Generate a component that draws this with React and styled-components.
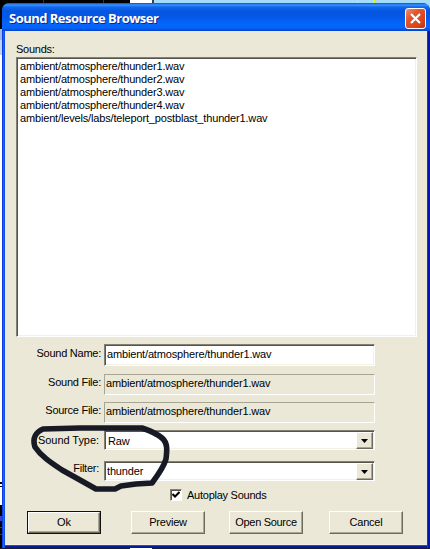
import React from "react";
import styled, { createGlobalStyle, css } from "styled-components";

const Global = createGlobalStyle`
  * { box-sizing: border-box; }
  html, body { margin: 0; overflow: hidden; }
`;

const Desktop = styled.div`
  width: 430px;
  height: 549px;
  padding: 3px 0 1px 2px;
  background:
    linear-gradient(90deg, #000 43px, #333 43px 44px, #000 44px 103px, #333 103px 104px, #000 104px 130px, #fff 130px 152px, #345 152px 154px, #a5dcfa 154px 357px, #e8f020 357px 358px, #a5dcfa 358px 373px, #e8f020 373px 375px, #a5dcfa 375px) 0 0 / 430px 9px no-repeat,
    linear-gradient(90deg, #151b38 130px, #fff 130px 152px, #151b38 152px) 0 548px / 430px 1px no-repeat,
    linear-gradient(#000 29px, #9fb6f0 29px 40px, #c4d2f6 40px 55px, #fff 55px 482px, #000 482px 484px, #fff 484px 486px, #000 486px 487px, #fff 487px 505px, #000 505px 516px, #3444c8 516px 521px, #000 521px 527px, #444 527px 528px, #000 528px 534px, #444 534px 535px, #000 535px) 0 0 / 6px 549px no-repeat,
    #101a3c;
`;

const Dialog = styled.main`
  position: relative;
  display: flex;
  flex-direction: column;
  width: 428px;
  height: 545px;
  border-radius: 8px 8px 0 0;
  background: linear-gradient(90deg, #0b3fdc 1px, #1d63f4 1px 2px, #0b50ea 2px 3px, #0b50ea 425px, #0a3ce4 425px 426px, #0418a8 426px);
  font: 11px/13px "Liberation Sans", Arial, sans-serif;
  color: #000;
  padding: 0 3px 3px;
`;

const TitleBar = styled.header`
  display: flex;
  align-items: center;
  justify-content: space-between;
  height: 28px;
  margin: 0 -3px;
  padding: 2px 4px 0 7px;
  border-radius: 7px 7px 0 0;
  background: linear-gradient(#0a4fd0 0, #3a94ff 2px, #1168ee 4px, #0556e0 8px, #0558e8 14px, #0366fd 21px, #0364f8 25px, #0443cf 28px);
`;

const Title = styled.h1`
  margin: 0;
  font: bold 13px/18px "Open Sans", "Noto Sans", sans-serif;
  letter-spacing: -0.52px;
  color: #fff;
  text-shadow: 1px 1px 0 #0a2a90;
  white-space: nowrap;
`;

const Close = styled.button`
  display: grid;
  place-items: center;
  width: 21px;
  height: 21px;
  padding: 0;
  border: 1px solid #fff;
  border-radius: 3px;
  background: linear-gradient(135deg, #f09078, #e2552f 35%, #d9431a 75%, #b8320e);
`;

const Body = styled.section`
  flex: 1;
  padding: 12px 9px 0 11px;
  border-bottom: 1px solid #f3f0e2;
  background: #ebe8d7;
  box-shadow: 0 1px #0a50ee, 0 3px #06189c;
`;

const Text = styled.span`
  letter-spacing: ${(p) => p.$track || 0}px;
  white-space: nowrap;
`;

const sunken = css`
  border: 1px solid;
  border-color: #827f73 #fff #fff #827f73;
`;

const ListBox = styled.ul`
  ${sunken}
  width: 401px;
  height: 280px;
  margin: 0 0 7px;
  padding: 2px 0 0 3px;
  list-style: none;
  background: #fff;
  box-shadow: inset 1px 1px #55534b, inset -1px -1px #f3f1e6;
`;

const Item = styled.li`
  height: 13px;
`;

const Heading = styled.div`
  height: 14px;
`;

const Field = styled.label`
  display: flex;
  height: ${(p) => p.$height}px;
`;

const Caption = styled.span`
  width: ${(p) => p.$width}px;
  margin-right: ${(p) => 88 - p.$width}px;
  padding-top: ${(p) => p.$drop}px;
  text-align: right;
`;

const Value = styled.span`
  ${sunken}
  display: flex;
  justify-content: space-between;
  width: 271px;
  height: ${(p) => p.$height}px;
  padding-left: ${(p) => p.$indent}px;
  line-height: ${(p) => p.$line}px;
  background: ${(p) => (p.$readOnly ? "#ebe8d7" : "#fff")};
  box-shadow: ${(p) => (p.$readOnly ? "none" : "inset 1px 1px #55534b, inset -1px -1px #f3f1e6")};
  ${(p) => p.$readOnly && "border-color: #a8a594 #fff #fff #a8a594;"}
`;

const raised = css`
  border: 1px solid;
  border-color: #fff #6d6a5e #6d6a5e #fff;
  box-shadow: inset -1px -1px #a9a695;
  background: #ebe8d7;
`;

const Arrow = styled.span`
  ${raised}
  display: grid;
  place-items: center;
  width: 17px;
  height: 17px;
  margin: 1px 1px 0 0;
`;

const CheckRow = styled.label`
  display: flex;
  align-items: center;
  gap: 5px;
  height: 13px;
  margin-left: 154px;
`;

const CheckBox = styled.span`
  ${sunken}
  display: grid;
  place-items: center;
  width: 12px;
  height: 12px;
  margin-top: -2px;
  background: #fff;
  box-shadow: inset 1px 1px #55534b;
`;

const Buttons = styled.footer`
  display: flex;
  margin: 9px 0 0 11px;
`;

const Button = styled.button`
  ${raised}
  flex: none;
  width: 74px;
  height: 23px;
  margin-right: ${(p) => p.$gap || 0}px;
  padding: 0 0 1px;
  font: inherit;
  color: #000;
  ${(p) => p.$primary && "outline: 1px solid #111; outline-offset: -1px; border: 2px solid; border-color: #fff #6d6a5e #6d6a5e #fff;"}
`;

const Marker = styled.svg`
  position: absolute;
  left: 27px;
  top: 418px;
  pointer-events: none;
`;

const SOUNDS = [
  "ambient/atmosphere/thunder1.wav",
  "ambient/atmosphere/thunder2.wav",
  "ambient/atmosphere/thunder3.wav",
  "ambient/atmosphere/thunder4.wav",
  "ambient/levels/labs/teleport_postblast_thunder1.wav",
];

const FIELDS = [
  { label: "Sound Name:", value: SOUNDS[0], height: 30, box: 22, indent: 2, drop: 3, line: 19, width: 85 },
  { label: "Sound File:", value: SOUNDS[0], height: 28, box: 21, indent: 1, drop: 2, line: 17, width: 85, readOnly: true },
  { label: "Source File:", value: SOUNDS[0], height: 28, box: 21, indent: 1, drop: 2, line: 17, width: 85, readOnly: true },
  { label: "Sound Type:", value: "Raw", height: 31, box: 20, indent: 3, drop: 4, line: 20, width: 83, combo: true, track: -0.05 },
  { label: "Filter:", value: "thunder", height: 28, box: 20, indent: 2, drop: 1, line: 18, width: 83, combo: true },
];

export default function App() {
  return (
    <Desktop>
      <Global />
      <Dialog>
        <TitleBar>
          <Title>Sound Resource Browser</Title>
          <Close aria-label="Close">
            <svg width="13" height="13" viewBox="0 0 13 13">
              <path d="M2 2L11 11M11 2L2 11" stroke="#fff" strokeWidth="2.2" />
            </svg>
          </Close>
        </TitleBar>
        <Body>
          <Heading><Text $track={-0.25}>Sounds:</Text></Heading>
          <ListBox>
            {SOUNDS.map((s) => <Item key={s}><Text $track={-0.16}>{s}</Text></Item>)}
          </ListBox>
          {FIELDS.map((f) => (
            <Field key={f.label} $height={f.height}>
              <Caption $width={f.width} $drop={f.drop}><Text $track={f.track ?? -0.25}>{f.label}</Text></Caption>
              <Value $height={f.box} $indent={f.indent} $line={f.line} $readOnly={f.readOnly}>
                <Text $track={-0.16}>{f.value}</Text>
                {f.combo && (
                  <Arrow>
                    <svg width="7" height="4" viewBox="0 0 7 4"><path d="M0 0H7L3.5 4Z" /></svg>
                  </Arrow>
                )}
              </Value>
            </Field>
          ))}
          <CheckRow>
            <CheckBox>
              <svg width="8" height="8" viewBox="0 0 8 8"><path d="M0.5 3L3 5.5L7.5 1" fill="none" stroke="#000" strokeWidth="2" /></svg>
            </CheckBox>
            <Text $track={-0.25}>Autoplay Sounds</Text>
          </CheckRow>
          <Buttons>
            <Button $primary $gap={30}><Text>Ok</Text></Button>
            <Button $gap={24}><Text $track={-0.2}>Preview</Text></Button>
            <Button $gap={26}><Text $track={-0.3}>Open Source</Text></Button>
            <Button><Text $track={-0.2}>Cancel</Text></Button>
          </Buttons>
        </Body>
        <Marker width="150" height="80" viewBox="29 421 150 80">
          <path d="M43 429L80 428L142 428C148 430 156 433 162 438C168 443 167 451 166 459C164 466 158 475 152 483L136 484L121 486L115 489L96 489L80 480L62 470C50 462 41 456 35 447C32 438 36 432 43 429Z" fill="none" stroke="#171a24" strokeWidth="5.6" strokeLinejoin="round" />
        </Marker>
      </Dialog>
    </Desktop>
  );
}
